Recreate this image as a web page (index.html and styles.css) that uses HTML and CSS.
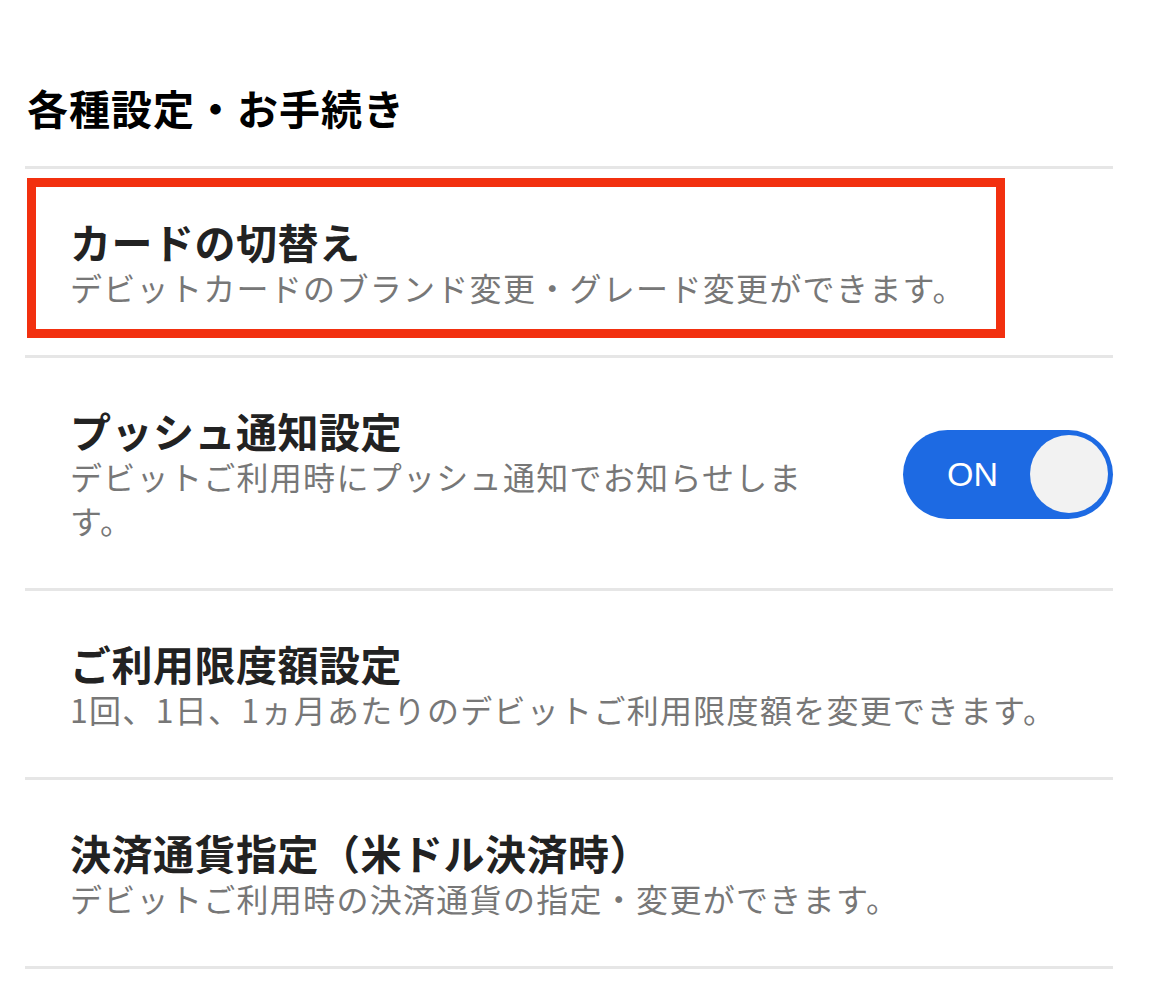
FILE: index.html
```html
<!DOCTYPE html>
<html lang="ja">
<head>
<meta charset="utf-8">
<title>各種設定・お手続き</title>
<link rel="stylesheet" href="styles.css">
</head>
<body>
<main class="page">
  <h1 class="section-title">各種設定・お手続き</h1>
  <ul class="settings">
    <li class="item item--highlight">
      <div class="item-text">
        <div class="item-title">カードの切替え</div>
        <div class="item-sub">デビットカードのブランド変更・グレード変更ができます。</div>
      </div>
      <span class="highlight-box" aria-hidden="true"></span>
    </li>
    <li class="item item--toggle">
      <div class="item-text">
        <div class="item-title">プッシュ通知設定</div>
        <div class="item-sub">デビットご利用時にプッシュ通知でお知らせします。</div>
      </div>
      <div class="toggle" role="switch" aria-checked="true">
        <span class="toggle-label">ON</span>
        <span class="toggle-knob"></span>
      </div>
    </li>
    <li class="item">
      <div class="item-text">
        <div class="item-title">ご利用限度額設定</div>
        <div class="item-sub">1回、1日、1ヵ月あたりのデビットご利用限度額を変更できます。</div>
      </div>
    </li>
    <li class="item">
      <div class="item-text">
        <div class="item-title">決済通貨指定（米ドル決済時）</div>
        <div class="item-sub">デビットご利用時の決済通貨の指定・変更ができます。</div>
      </div>
    </li>
  </ul>
</main>
</body>
</html>
```

FILE: styles.css
```css
* { box-sizing: border-box; }

html, body {
  margin: 0;
  padding: 0;
  background: #ffffff;
}

body {
  font-family: "Noto Sans CJK JP", "Noto Sans", sans-serif;
  color: #222222;
}

.page {
  padding: 0 36px 0 25px;
}

.section-title {
  margin: 83px 0 35px 2px;
  font-size: 41px;
  line-height: 48px;
  letter-spacing: 1px;
  font-weight: 700;
  color: #000000;
}

.settings {
  list-style: none;
  margin: 0;
  padding: 0;
  border-top: 3px solid #e6e6e6;
}

.item {
  position: relative;
  display: flex;
  align-items: center;
  padding: 48px 0 46px 45px;
  border-bottom: 3px solid #e6e6e6;
}

.item-text {
  flex: 1;
  min-width: 0;
}

.item--toggle .item-text {
  max-width: 750px;
}

.item-title {
  font-size: 41px;
  line-height: 48px;
  letter-spacing: 0.5px;
  font-weight: 700;
  color: #222222;
}

.item-sub {
  font-size: 32px;
  line-height: 44px;
  letter-spacing: 1.3px;
  color: #777777;
}

.highlight-box {
  position: absolute;
  top: 9px;
  left: 2px;
  width: 978px;
  height: 160px;
  border: 9px solid #f2300f;
  pointer-events: none;
}

.toggle {
  margin-left: auto;
  flex: none;
  width: 210px;
  height: 89px;
  border-radius: 45px;
  background: #1d6ae3;
  display: flex;
  align-items: center;
  padding: 0 5px 0 44px;
}

.toggle-label {
  font-family: "Liberation Sans", Arial, sans-serif;
  font-size: 34px;
  color: #ffffff;
}

.toggle-knob {
  margin-left: auto;
  width: 78px;
  height: 78px;
  border-radius: 50%;
  background: #f2f2f2;
}
```
